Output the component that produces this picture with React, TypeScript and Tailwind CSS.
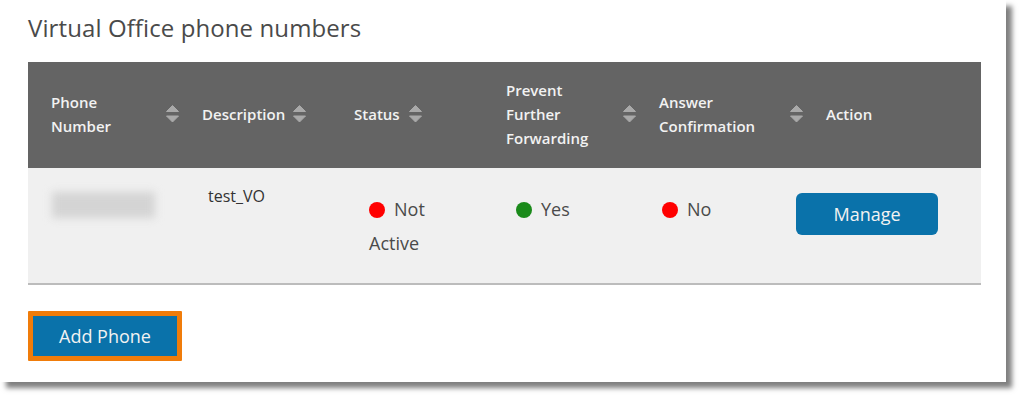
import React from "react";

const SortIcon = () => (
  <svg width="13" height="18" viewBox="0 0 13 18" className="shrink-0">
    <path d="M6.5 0.5 L12.5 6.5 L0.5 6.5 Z" fill="#a9a9a9" strokeLinejoin="round" stroke="#a9a9a9" strokeWidth="1" />
    <path d="M0.5 11 L12.5 11 L6.5 17 Z" fill="#a9a9a9" strokeLinejoin="round" stroke="#a9a9a9" strokeWidth="1" />
  </svg>
);

const Dot = ({ color }: { color: string }) => (
  <span className={`inline-block w-4 h-4 rounded-full align-[-2px] mr-[9px] ${color}`} />
);

export default function App() {
  return (
    <div className="w-[1024px] h-[400px] bg-white font-['Open_Sans',sans-serif]">
      <div className="w-[1006px] h-[382px] bg-white shadow-[6px_6px_5px_rgba(0,0,0,0.5)] pl-[28px] pr-[25px] pt-[12px]">
        <h1 className="text-[24px] leading-[32px] text-[#4a4a4a] tracking-[0.1px]">Virtual Office phone numbers</h1>

        <div className="mt-[18px]">
          <div className="grid grid-cols-[152px_151px_152px_153px_167px_178px] h-[106px] pb-[2px] bg-[#646464] text-[#f2f2f2] text-[15px] leading-[24px] font-semibold">
            <div className="flex items-center pl-[23px]">
              <span className="w-[115px]">Phone<br />Number</span>
              <SortIcon />
            </div>
            <div className="flex items-center pl-[22px] gap-[8px]">
              <span>Description</span>
              <SortIcon />
            </div>
            <div className="flex items-center pl-[23px] gap-[9px]">
              <span>Status</span>
              <SortIcon />
            </div>
            <div className="flex items-center pl-[23px]">
              <span className="w-[118px]">Prevent<br />Further<br />Forwarding</span>
              <SortIcon />
            </div>
            <div className="flex items-center pl-[23px]">
              <span className="w-[131px]">Answer<br />Confirmation</span>
              <SortIcon />
            </div>
            <div className="flex items-center pl-[23px]">
              <span>Action</span>
            </div>
          </div>

          <div className="grid grid-cols-[156px_161px_147px_146px_134px_185px] h-[117px] bg-[#f0f0f0] border-b-[2px] border-[#bcbcbc] pl-[24px] text-[#4a4a4a]">
            <div className="pt-[24px]">
              <div className="w-[103px] h-[26px] bg-[#d4d4d4] blur-[4px]" />
            </div>
            <div className="pt-[17px] text-[16px] leading-[22px] text-[#333]">test_VO</div>
            <div className="pt-[24px] text-[18px] leading-[34px] w-[100px]">
              <Dot color="bg-[#ff0000]" />Not Active
            </div>
            <div className="pt-[24px] text-[18px] leading-[34px]">
              <Dot color="bg-[#1a8a1a]" />Yes
            </div>
            <div className="pt-[24px] text-[18px] leading-[34px]">
              <Dot color="bg-[#ff0000]" />No
            </div>
            <div className="pt-[25px]">
              <button className="w-[142px] h-[42px] rounded-[6px] bg-[#0a72aa] text-[#f2f2f2] text-[18px]">Manage</button>
            </div>
          </div>
        </div>

        <div className="mt-[26px]">
          <button className="w-[154px] h-[50px] border-[5px] border-[#f07c0a] bg-[#0a72aa] text-[#f2f2f2] text-[18px] rounded-[1px]">Add Phone</button>
        </div>
      </div>
    </div>
  );
}
